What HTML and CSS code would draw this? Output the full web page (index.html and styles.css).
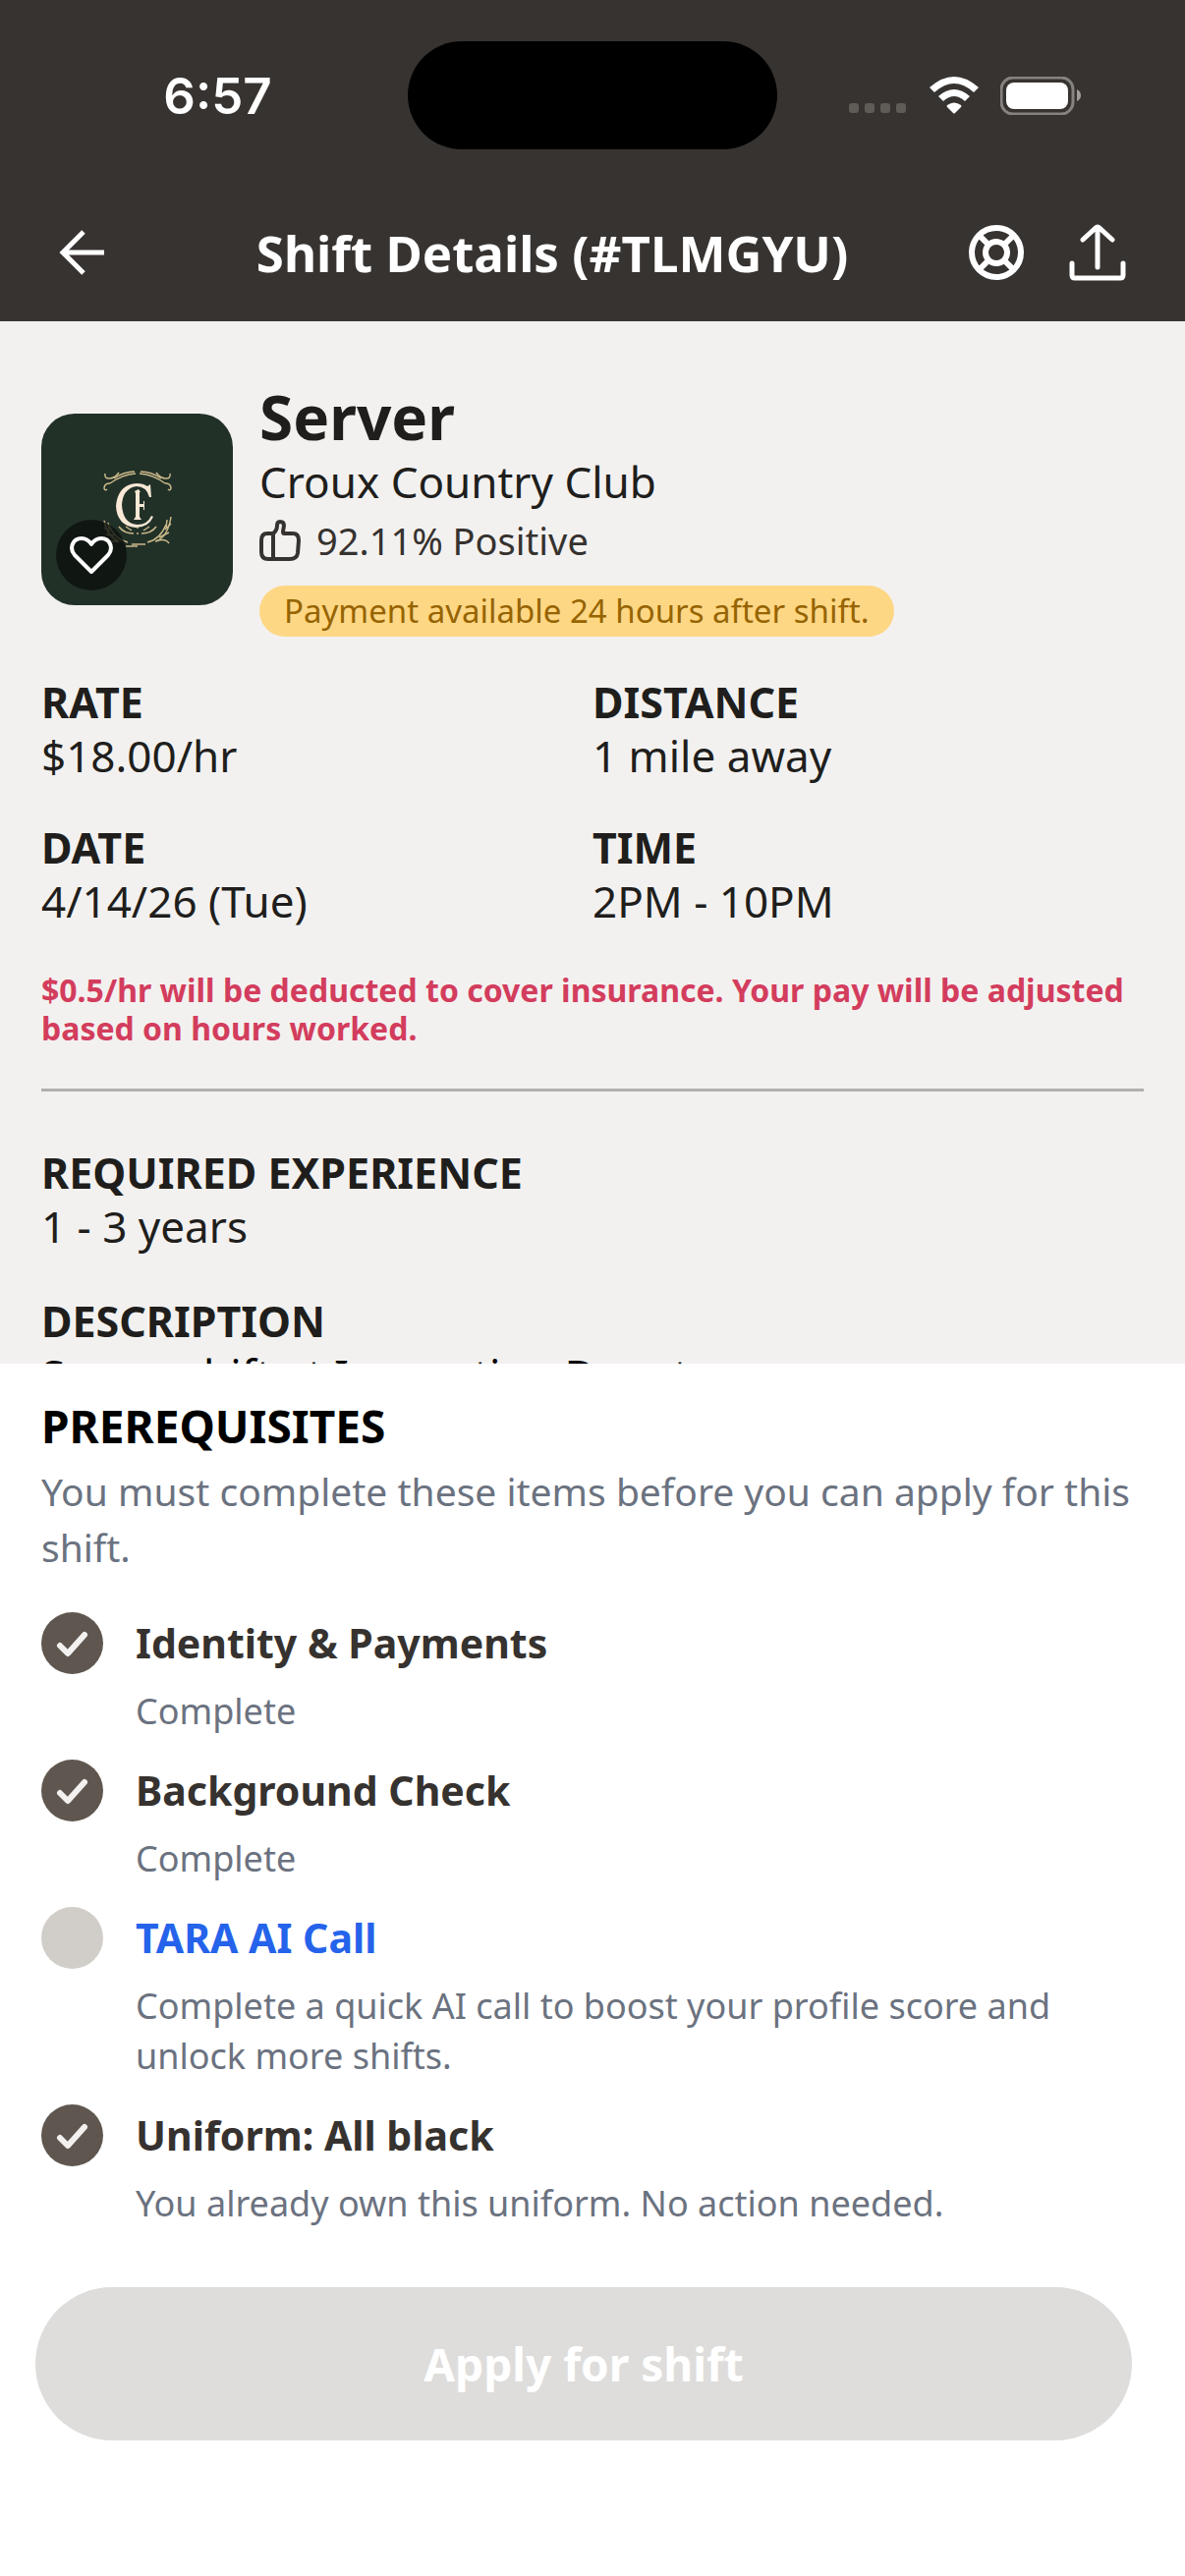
FILE: index.html
```html
<!DOCTYPE html>
<html lang="en">
<head>
    <meta charset="UTF-8">
    <meta name="viewport" content="width=device-width, initial-scale=1.0">
    <title>Shift Details</title>
    <link rel="stylesheet" href="styles.css">
</head>
<body>
    <header class="top">
        <div class="status-bar">
            <span class="clock">6:57</span>
            <span class="island"></span>
            <div class="status-icons">
                <svg width="60" height="38" viewBox="0 0 60 38" fill="#5f5c58">
                    <rect x="0" y="27" width="10" height="10" rx="3"/>
                    <rect x="16" y="27" width="10" height="10" rx="3"/>
                    <rect x="32" y="27" width="10" height="10" rx="3"/>
                    <rect x="48" y="27" width="10" height="10" rx="3"/>
                </svg>
                <svg width="50" height="38" viewBox="0 0 50 38" fill="#fff">
                    <path d="M0 11Q25-11 50 11L45 16Q25-2 5 16Z"/>
                    <path d="M9 20Q25 6 41 20L36 25Q25 15 14 25Z"/>
                    <path d="M18 29Q25 24 32 29Q33 30 32 31L26 37Q25 38 24 37L18 31Q17 30 18 29Z"/>
                </svg>
                <svg width="82" height="39" viewBox="0 0 82 39">
                    <rect x="1" y="1" width="73" height="37" rx="12" fill="none" stroke="#85827f" stroke-width="3"/>
                    <rect x="6" y="6" width="63" height="27" rx="8" fill="#fff"/>
                    <path d="M78 13Q82 15 82 19Q82 23 78 25Z" fill="#a09e9c"/>
                </svg>
            </div>
        </div>
        <nav class="nav-bar">
            <button class="icon-button" aria-label="Back">
                <svg width="48" height="48" viewBox="0 0 48 48" fill="none" stroke="#fff" stroke-width="5">
                    <path d="M46 24H4M25 3L4 24L25 45"/>
                </svg>
            </button>
            <h1>Shift Details (#TLMGYU)</h1>
            <div class="actions">
                <button class="icon-button" aria-label="Help">
                    <svg width="56" height="56" viewBox="0 0 56 56" fill="none" stroke="#fff" stroke-width="6">
                        <circle cx="28" cy="28" r="25"/>
                        <circle cx="28" cy="28" r="11"/>
                        <path d="M10 10L20 20M46 10L36 20M10 46L20 36M46 46L36 36"/>
                    </svg>
                </button>
                <button class="icon-button" aria-label="Share">
                    <svg width="58" height="58" viewBox="0 0 58 58" fill="none" stroke="#fff" stroke-width="5" stroke-linecap="round" stroke-linejoin="round">
                        <path d="M29 44V3M14 16L27 4Q29 2 31 4L44 16M3 40V52Q3 55 6 55H52Q55 55 55 52V40"/>
                    </svg>
                </button>
            </div>
        </nav>
    </header>

    <main class="details">
        <section class="summary">
            <div class="logo">
                <svg width="72" height="78" viewBox="0 0 72 78" fill="none" stroke="#c9b88a" stroke-width="1.5">
                    <path d="M8 13Q20 4 34 3M38 3Q52 4 64 13M12 8Q22 1 33 1M39 1Q50 1 60 8"/>
                    <path d="M8 13Q2 13 2 18Q3 21 5 19M64 13Q70 13 70 18Q69 21 67 19M3 3Q2 8 7 8Q13 8 17 2M69 3Q70 8 65 8Q59 8 55 2"/>
                    <path d="M2 51Q5 67 17 72M70 47Q67 67 55 72M7 56Q13 70 26 73M65 55Q59 70 46 73M30 75H44M24 77H36"/>
                    <path d="M2 58L8 62M4 65L12 66M6 53L7 60M70 54L64 60M68 63L58 68M66 50L65 58M4 72H16M54 72Q64 68 68 74"/>
                    <path d="M17 57Q22 64 32 64M24 57L30 61M55 57Q50 64 40 64M48 57L42 61M36 57V59M36 63V65"/>
                    <path d="M49 14L50 27H48Q45 16 35 16Q21 18 20 35Q21 54 36 55Q46 55 50 46L52 47Q47 58 34 58Q15 56 14 36Q16 14 35 13Q42 13 46 16Z" fill="#f8e8d5" stroke="none"/>
                    <path d="M33 21L37 19L39 22H38V34H42V31H43V40H42V37H38V47L40 50H32L34 47V23Z" fill="#f8e8d5" stroke="none"/>
                </svg>
                <button class="favorite" aria-label="Favorite">
                    <svg width="44" height="40" viewBox="0 0 44 40" fill="none" stroke="#fff" stroke-width="4" stroke-linejoin="round">
                        <path d="M22 37L5 20C-1 13 3 3 12 3C17 3 20 6 22 9C24 6 27 3 32 3C41 3 45 13 39 20Z"/>
                    </svg>
                </button>
            </div>
            <div class="headline">
                <h2>Server</h2>
                <p class="venue">Croux Country Club</p>
                <p class="rating">
                    <svg width="42" height="42" viewBox="0 0 42 42" fill="none" stroke="#36322f" stroke-width="4" stroke-linejoin="round">
                        <path d="M14 14H8Q2 14 2 21V33Q2 40 9 40H31Q38 40 39 34L40 21Q40 14 34 14H25Q24 14 24 12L25 6Q25 2 21 2Q18 2 18 6Q18 11 14 14V39"/>
                    </svg>
                    92.11% Positive
                </p>
                <span class="pill">Payment available 24 hours after shift.</span>
            </div>
        </section>

        <dl class="facts">
            <div>
                <dt>RATE</dt>
                <dd>$18.00/hr</dd>
            </div>
            <div>
                <dt>DISTANCE</dt>
                <dd>1 mile away</dd>
            </div>
            <div>
                <dt>DATE</dt>
                <dd>4/14/26 (Tue)</dd>
            </div>
            <div>
                <dt>TIME</dt>
                <dd>2PM - 10PM</dd>
            </div>
        </dl>
        <p class="notice">$0.5/hr will be deducted to cover insurance. Your pay will be adjusted based on hours worked.</p>
        <hr>
        <dl class="more">
            <div>
                <dt>REQUIRED EXPERIENCE</dt>
                <dd>1 - 3 years</dd>
            </div>
            <div>
                <dt>DESCRIPTION</dt>
                <dd class="description">Server shift at Innovation Depot</dd>
            </div>
        </dl>
    </main>

    <section class="sheet">
        <h2>PREREQUISITES</h2>
        <p class="intro">You must complete these items before you can apply for this shift.</p>
        <ul class="checklist">
            <li>
                <span class="mark done"><svg width="34" height="34" viewBox="0 0 34 34"><path d="M4 19L12 27L29 8"/></svg></span>
                <div>
                    <h3>Identity &amp; Payments</h3>
                    <p>Complete</p>
                </div>
            </li>
            <li>
                <span class="mark done"><svg width="34" height="34" viewBox="0 0 34 34"><path d="M4 19L12 27L29 8"/></svg></span>
                <div>
                    <h3>Background Check</h3>
                    <p>Complete</p>
                </div>
            </li>
            <li>
                <span class="mark"></span>
                <div>
                    <h3><a href="#">TARA AI Call</a></h3>
                    <p>Complete a quick AI call to boost your profile score and unlock more shifts.</p>
                </div>
            </li>
            <li>
                <span class="mark done"><svg width="34" height="34" viewBox="0 0 34 34"><path d="M4 19L12 27L29 8"/></svg></span>
                <div>
                    <h3>Uniform: All black</h3>
                    <p>You already own this uniform. No action needed.</p>
                </div>
            </li>
        </ul>
        <button class="apply" disabled>Apply for shift</button>
    </section>
</body>
</html>
```
FILE: styles.css
```css
* {
    box-sizing: border-box;
}

body {
    font-family: 'Noto Sans', sans-serif;
    background-color: #fff;
    color: #201e1c;
    margin: 0;
    display: flex;
    flex-direction: column;
    height: 100vh;
}

h1, h2, h3, p, dl, dd, ul {
    margin: 0;
    padding: 0;
}

svg {
    display: block;
    flex-shrink: 0;
}

button {
    font-family: inherit;
    border: none;
    padding: 0;
}

.top {
    flex-shrink: 0;
    background-color: #373330;
    color: #fff;
}

.status-bar {
    display: grid;
    grid-template-columns: 1fr 376px 1fr;
    align-items: center;
    height: 194px;
}

.clock {
    font-family: Inter, sans-serif;
    font-size: 51px;
    font-weight: 600;
    padding-left: 28px;
    text-align: center;
}

.island {
    height: 110px;
    border-radius: 55px;
    background-color: #000;
}

.status-icons {
    display: flex;
    justify-content: flex-end;
    gap: 22px;
    padding-right: 106px;
}

.nav-bar {
    display: flex;
    align-items: center;
    justify-content: space-between;
    height: 133px;
    padding: 0 60px 8px;
}

.nav-bar h1 {
    font-size: 51px;
    font-weight: 700;
    line-height: 68px;
    padding-left: 30px;
}

.icon-button {
    background: none;
}

.actions {
    display: flex;
    gap: 46px;
}

.details {
    flex: 1;
    min-height: 0;
    overflow: hidden;
    padding: 61px 42px 0;
    background-color: #f3f1f0;
}

.summary {
    display: flex;
    align-items: center;
    gap: 27px;
}

.logo {
    position: relative;
    display: flex;
    align-items: center;
    justify-content: center;
    width: 195px;
    height: 195px;
    border-radius: 34px;
    background-color: #223128;
}

.favorite {
    position: absolute;
    left: 15px;
    bottom: 15px;
    display: flex;
    align-items: center;
    justify-content: center;
    width: 72px;
    height: 72px;
    border-radius: 50%;
    background-color: rgba(12, 18, 14, 0.8);
}

.headline h2 {
    font-size: 62px;
    line-height: 72px;
}

.venue {
    font-size: 44px;
    line-height: 60px;
}

.rating {
    display: flex;
    align-items: center;
    gap: 16px;
    margin-bottom: 16px;
    font-size: 38px;
    line-height: 60px;
    color: #36322f;
}

.pill {
    display: block;
    width: fit-content;
    padding: 0 25px;
    border-radius: 26px;
    background-color: #fed785;
    color: #966400;
    font-size: 33px;
    line-height: 52px;
}

.facts {
    display: grid;
    grid-template-columns: 1fr 1fr;
    row-gap: 40px;
    margin-top: 40px;
}

dt {
    font-size: 43px;
    font-weight: 700;
    line-height: 54px;
}

dd {
    font-size: 44px;
    line-height: 54px;
}

.notice {
    margin-top: 44px;
    color: #d33d5d;
    font-size: 32px;
    font-weight: 700;
    line-height: 39px;
}

hr {
    height: 3px;
    margin: 42px 0 56px;
    border: none;
    background-color: #b2b0ae;
}

.more {
    display: flex;
    flex-direction: column;
    gap: 43px;
}

.description {
    color: #000;
}

.sheet {
    flex-shrink: 0;
    padding: 33px 42px 138px;
}

.sheet h2 {
    color: #000;
    font-size: 46px;
    line-height: 60px;
}

.intro {
    margin-top: 8px;
    color: #6b7280;
    font-size: 39px;
    line-height: 57px;
}

.checklist {
    display: flex;
    flex-direction: column;
    gap: 24px;
    margin-top: 38px;
    list-style: none;
}

.checklist li {
    display: flex;
    gap: 33px;
}

.mark {
    display: flex;
    align-items: center;
    justify-content: center;
    flex-shrink: 0;
    width: 63px;
    height: 63px;
    border-radius: 50%;
    background-color: #d1cdc8;
}

.mark.done {
    background-color: #5f574f;
}

.mark path {
    fill: none;
    stroke: #f3f1f0;
    stroke-width: 6;
    stroke-linecap: round;
    stroke-linejoin: round;
}

.checklist h3 {
    color: #36322f;
    font-size: 41px;
    font-weight: 700;
    line-height: 63px;
}

.checklist a {
    color: #2563eb;
    text-decoration: none;
}

.checklist p {
    margin-top: 12px;
    color: #6b7280;
    font-size: 36px;
    line-height: 51px;
}

.apply {
    display: block;
    width: calc(100% - 6px);
    margin: 60px 0 0 -6px;
    height: 156px;
    border-radius: 78px;
    background-color: #dedddb;
    color: #fff;
    font-size: 46px;
    font-weight: 700;
}
```
